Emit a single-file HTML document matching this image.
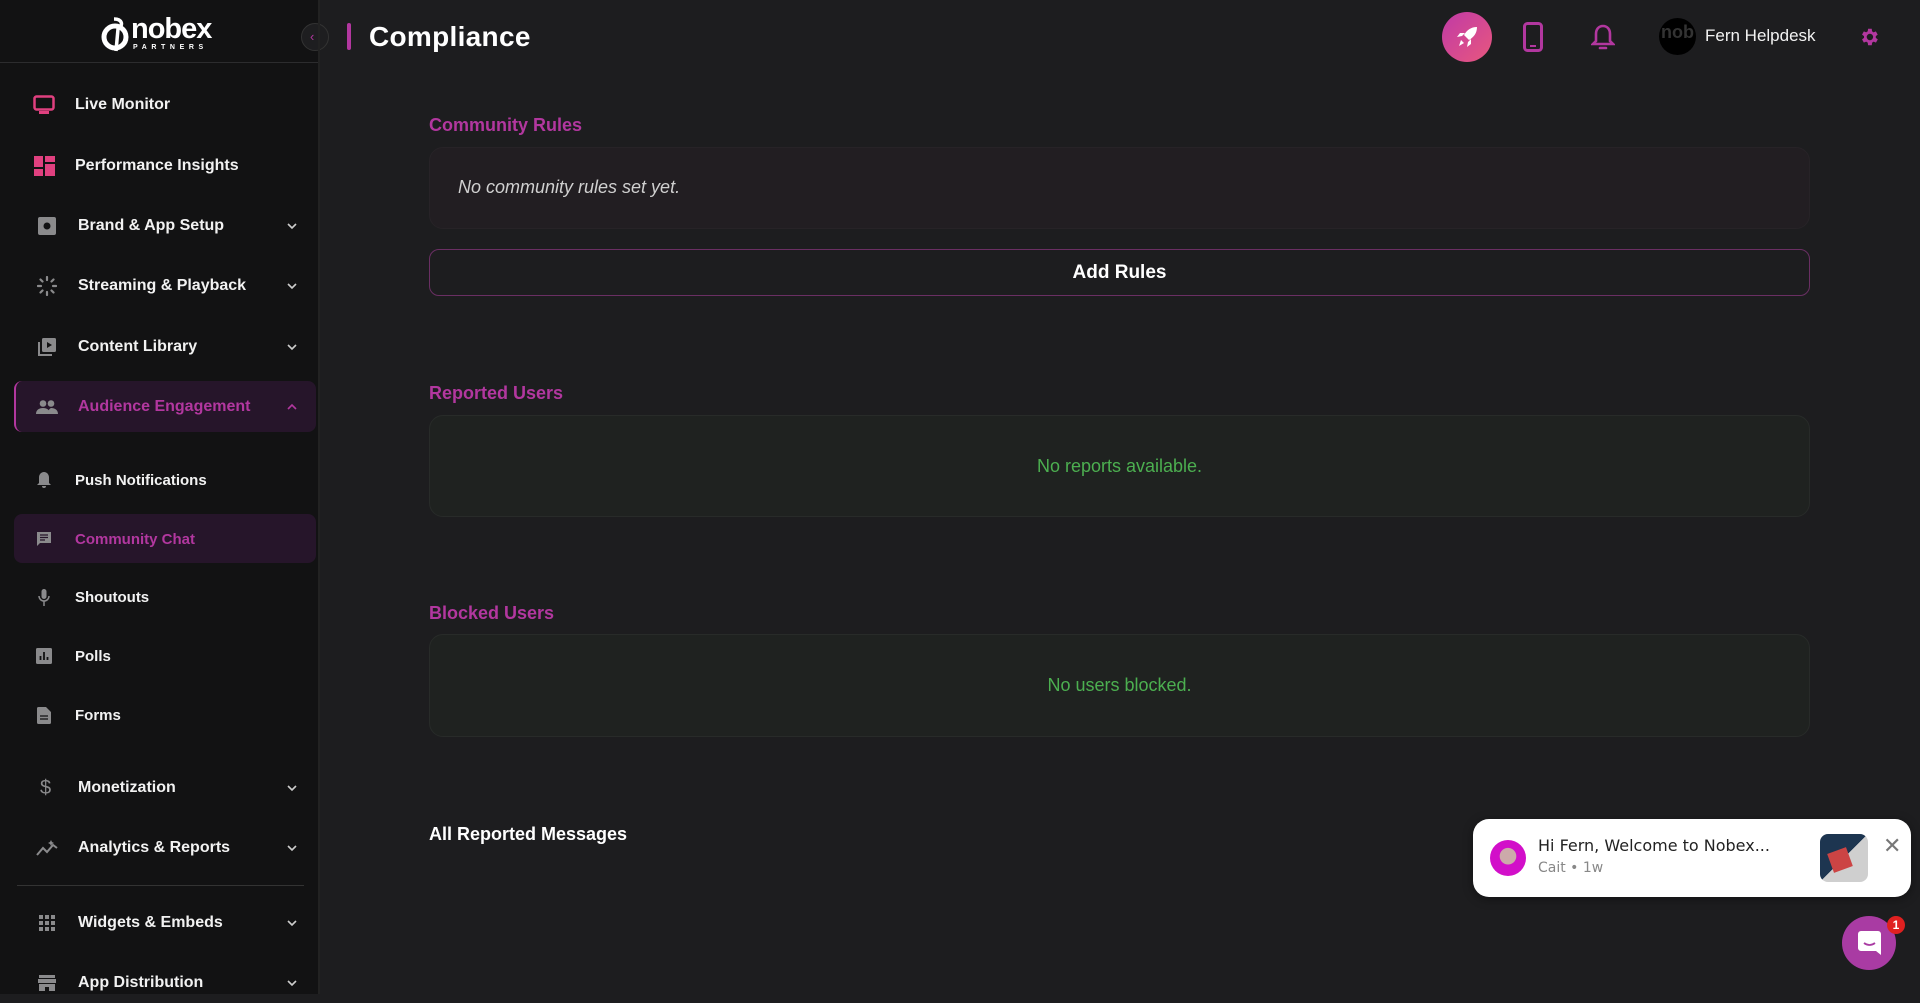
<!DOCTYPE html>
<html><head><meta charset="utf-8"><style>
*{margin:0;padding:0;box-sizing:border-box}
body{width:1920px;height:994px;overflow:hidden;background:#1d1d1f;font-family:"Liberation Sans",sans-serif;color:#fff;position:relative}
.sb{position:absolute;left:0;top:0;width:318px;height:994px;background:#121213}
.logo{position:absolute;left:0;top:0;width:318px;height:63px;border-bottom:1px solid #2c2c2e}
.it{position:absolute;left:0;width:318px;height:40px;display:flex;align-items:center;font-weight:700;font-size:16px;color:#f2f2f2}
.it svg{position:absolute}
.it .t{position:absolute;left:78px}
.it .c{position:absolute;left:287px;width:10px;height:10px}
.sub{font-size:15px}
.sub .t{left:75px}
.hl{position:absolute;border-radius:8px;background:#26152a}
.main .lbl{position:absolute;left:429px;font-weight:700;font-size:18px;color:#b2379f}
.box{position:absolute;left:429px;width:1381px;border-radius:14px}
</style></head><body>
<div class="sb">
 <div class="logo">
  <svg style="position:absolute;left:100px;top:17px" width="32" height="36" viewBox="0 0 32 36"><circle cx="15" cy="20" r="11" fill="none" stroke="#fff" stroke-width="5"/><path d="M14 2 C22 2 24 8 18 12 L16 34" stroke="#fff" stroke-width="3.5" fill="none"/></svg>
  <div style="position:absolute;left:131px;top:13px;font-size:29px;font-weight:700;letter-spacing:-1px">nobex</div>
  <div style="position:absolute;left:133px;top:44px;font-size:7px;font-weight:700;letter-spacing:4.6px">PARTNERS</div>
 </div>
 <div style="position:absolute;left:301px;top:23px;width:28px;height:28px;border-radius:50%;background:#1e1e20;border:1px solid #333;color:#b2379f;font-size:13px;line-height:26px;text-indent:8px">‹</div>

 <div class="it" style="top:85px"><svg style="left:33px" width="22" height="20" viewBox="0 0 22 20"><rect x="1.5" y="1.5" width="19" height="13" rx="2" fill="none" stroke="#e0407f" stroke-width="2.5"/><rect x="6" y="16" width="10" height="3" fill="#e0407f"/></svg><span class="t" style="left:75px">Live Monitor</span></div>
 <div class="it" style="top:146px"><svg style="left:34px" width="21" height="20" viewBox="0 0 21 20"><rect x="0" y="0" width="9" height="11" fill="#e0407f"/><rect x="11" y="0" width="10" height="6" fill="#e0407f"/><rect x="0" y="13" width="9" height="7" fill="#e0407f"/><rect x="11" y="8" width="10" height="12" fill="#e0407f"/></svg><span class="t" style="left:75px">Performance Insights</span></div>
 <div class="it" style="top:206px"><svg style="left:38px" width="18" height="18" viewBox="0 0 18 18"><rect width="18" height="18" rx="2" fill="#8a8a8c"/><circle cx="9" cy="9" r="3.5" fill="#121213"/></svg><span class="t">Brand &amp; App Setup</span><svg class="c" viewBox="0 0 10 10"><path d="M1 3l4 4 4-4" stroke="#ccc" stroke-width="1.6" fill="none"/></svg></div>
 <div class="it" style="top:266px"><svg style="left:37px" width="20" height="20" viewBox="0 0 20 20" stroke="#8a8a8c" stroke-width="2.2" stroke-linecap="round"><path d="M10 1v3M10 16v3M1 10h3M16 10h3M3.5 3.5l2 2M14.5 14.5l2 2M3.5 16.5l2-2M14.5 5.5l2-2"/></svg><span class="t">Streaming &amp; Playback</span><svg class="c" viewBox="0 0 10 10"><path d="M1 3l4 4 4-4" stroke="#ccc" stroke-width="1.6" fill="none"/></svg></div>
 <div class="it" style="top:327px"><svg style="left:37px" width="20" height="20" viewBox="0 0 20 20"><path d="M2 5v13h13" stroke="#8a8a8c" stroke-width="2" fill="none"/><rect x="5" y="1" width="14" height="14" rx="1.5" fill="#8a8a8c"/><path d="M10 5l5 3-5 3z" fill="#121213"/></svg><span class="t">Content Library</span><svg class="c" viewBox="0 0 10 10"><path d="M1 3l4 4 4-4" stroke="#ccc" stroke-width="1.6" fill="none"/></svg></div>

 <div class="hl" style="left:14px;top:381px;width:302px;height:51px;border-left:2px solid #b2379f"></div>
 <div class="it" style="top:387px;color:#b2379f"><svg style="left:36px" width="22" height="14" viewBox="0 0 22 14" fill="#8a8a8c"><circle cx="7" cy="3.5" r="3.3"/><circle cx="15" cy="3.5" r="3.3"/><path d="M0 14c0-4 3-6 7-6s7 2 7 6zM12 14c0-3 1-5 3-6 4 0 7 2 7 6z"/></svg><span class="t">Audience Engagement</span><svg class="c" viewBox="0 0 10 10"><path d="M1 7l4-4 4 4" stroke="#b2379f" stroke-width="1.6" fill="none"/></svg></div>

 <div class="it sub" style="top:460px"><svg style="left:37px" width="14" height="16" viewBox="0 0 14 16" fill="#8a8a8c"><path d="M7 0c3 0 5 2.5 5 5.5V11l2 2H0l2-2V5.5C2 2.5 4 0 7 0zM5 14h4a2 2 0 01-4 0z"/></svg><span class="t">Push Notifications</span></div>
 <div class="hl" style="left:14px;top:514px;width:302px;height:49px"></div>
 <div class="it sub" style="top:519px;color:#b2379f"><svg style="left:36px" width="16" height="16" viewBox="0 0 16 16"><path d="M1 1h14v11H4l-3 3z" fill="#8a8a8c"/><path d="M4 4h8M4 6.5h8M4 9h5" stroke="#26152a" stroke-width="1.3"/></svg><span class="t">Community Chat</span></div>
 <div class="it sub" style="top:577px"><svg style="left:38px" width="12" height="17" viewBox="0 0 12 17"><rect x="3.5" y="0" width="5" height="10" rx="2.5" fill="#8a8a8c"/><path d="M1 7a5 5 0 0010 0M6 12v5" stroke="#8a8a8c" stroke-width="1.5" fill="none"/></svg><span class="t">Shoutouts</span></div>
 <div class="it sub" style="top:636px"><svg style="left:36px" width="16" height="16" viewBox="0 0 16 16"><rect width="16" height="16" rx="1.5" fill="#8a8a8c"/><path d="M4.5 12V8M8 12V4M11.5 12V9" stroke="#121213" stroke-width="1.8"/></svg><span class="t">Polls</span></div>
 <div class="it sub" style="top:695px"><svg style="left:37px" width="14" height="17" viewBox="0 0 14 17"><path d="M0 1.5A1.5 1.5 0 011.5 0H9l5 5v10.5a1.5 1.5 0 01-1.5 1.5h-11A1.5 1.5 0 010 15.5z" fill="#8a8a8c"/><path d="M3 9h8M3 12h8" stroke="#121213" stroke-width="1.3"/></svg><span class="t">Forms</span></div>

 <div class="it" style="top:768px"><span style="position:absolute;left:40px;color:#8a8a8c;font-size:20px;font-weight:400">$</span><span class="t">Monetization</span><svg class="c" viewBox="0 0 10 10"><path d="M1 3l4 4 4-4" stroke="#ccc" stroke-width="1.6" fill="none"/></svg></div>
 <div class="it" style="top:828px"><svg style="left:36px" width="22" height="16" viewBox="0 0 22 16"><path d="M1 15l6-7 4 4 6-7 4 3" stroke="#8a8a8c" stroke-width="2" fill="none"/><path d="M15 0l1 2 2 1-2 1-1 2-1-2-2-1 2-1z" fill="#8a8a8c"/></svg><span class="t">Analytics &amp; Reports</span><svg class="c" viewBox="0 0 10 10"><path d="M1 3l4 4 4-4" stroke="#ccc" stroke-width="1.6" fill="none"/></svg></div>
 <div style="position:absolute;left:17px;top:885px;width:287px;height:1px;background:#333"></div>
 <div class="it" style="top:903px"><svg style="left:39px" width="16" height="16" viewBox="0 0 16 16" fill="#8a8a8c"><rect x="0" y="0" width="4" height="4"/><rect x="6" y="0" width="4" height="4"/><rect x="12" y="0" width="4" height="4"/><rect x="0" y="6" width="4" height="4"/><rect x="6" y="6" width="4" height="4"/><rect x="12" y="6" width="4" height="4"/><rect x="0" y="12" width="4" height="4"/><rect x="6" y="12" width="4" height="4"/><rect x="12" y="12" width="4" height="4"/></svg><span class="t">Widgets &amp; Embeds</span><svg class="c" viewBox="0 0 10 10"><path d="M1 3l4 4 4-4" stroke="#ccc" stroke-width="1.6" fill="none"/></svg></div>
 <div class="it" style="top:963px"><svg style="left:38px" width="18" height="16" viewBox="0 0 18 16" fill="#8a8a8c"><rect x="1" y="0" width="16" height="3"/><rect x="0" y="4" width="18" height="4"/><path d="M1 9h16v7h-6v-4H7v4H1z"/></svg><span class="t">App Distribution</span><svg class="c" viewBox="0 0 10 10"><path d="M1 3l4 4 4-4" stroke="#ccc" stroke-width="1.6" fill="none"/></svg></div>
</div>

<div style="position:absolute;left:318px;top:0;width:2px;height:994px;background:#222"></div>
<div style="position:absolute;left:347px;top:23px;width:4px;height:27px;border-radius:2px;background:#b2379f"></div>
<div style="position:absolute;left:369px;top:21px;font-size:28px;font-weight:700;letter-spacing:0.3px">Compliance</div>

<div style="position:absolute;left:1442px;top:12px;width:50px;height:50px;border-radius:50%;background:linear-gradient(135deg,#c03aa6,#e8577e)"><svg style="position:absolute;left:13px;top:13px" width="24" height="24" viewBox="0 0 24 24" fill="#fff"><path d="M22 2c-6 0-10 3-13 8l5 5c5-3 8-7 8-13zM7 11l-5 1 3-4h5zM13 17l-1 5 4-3v-5zM6 15l3 3-5 3z"/></svg></div>
<svg style="position:absolute;left:1523px;top:22px" width="20" height="30" viewBox="0 0 20 30"><rect x="1.5" y="1.5" width="17" height="27" rx="3" fill="none" stroke="#b2379f" stroke-width="3"/><rect x="7" y="23" width="6" height="2" fill="#b2379f"/></svg>
<svg style="position:absolute;left:1591px;top:23px" width="24" height="28" viewBox="0 0 24 28"><path d="M12 3c4.5 0 7 3.5 7 8v7l3 3H2l3-3v-7c0-4.5 2.5-8 7-8z" fill="none" stroke="#b2379f" stroke-width="2.6"/><path d="M9 25h6" stroke="#b2379f" stroke-width="2.6" stroke-linecap="round"/></svg>
<div style="position:absolute;left:1659px;top:18px;width:37px;height:37px;border-radius:50%;background:#000;overflow:hidden;font-weight:700;font-size:18px;color:#333;line-height:28px;text-align:center">nob</div>
<div style="position:absolute;left:1705px;top:26px;font-size:17px;color:#f2f2f2">Fern Helpdesk</div>
<svg style="position:absolute;left:1858px;top:26px" width="22" height="22" viewBox="0 0 24 24" fill="#b2379f"><path d="M19.4 13a7.5 7.5 0 000-2l2.1-1.6-2-3.5-2.5 1a7.6 7.6 0 00-1.7-1L15 3h-4l-.4 2.9a7.6 7.6 0 00-1.7 1l-2.5-1-2 3.5L6.6 11a7.5 7.5 0 000 2l-2.2 1.6 2 3.5 2.5-1c.5.4 1.100.7 1.7 1L11 21h4l.4-2.9c.6-.3 1.200-.6 1.700-1l2.500 1 2-3.500zM13 15.5a3.5 3.5 0 110-7 3.5 3.5 0 010 7z"/></svg>

<div class="main">
 <div class="lbl" style="top:115px">Community Rules</div>
 <div class="box" style="top:147px;height:82px;background:#221e22;border:1px solid #272327"></div>
 <div style="position:absolute;left:458px;top:177px;font-style:italic;font-size:18px;color:#d0d0d0">No community rules set yet.</div>
 <div class="box" style="top:249px;height:47px;border:1px solid #6a2f63;border-radius:10px;text-align:center;line-height:45px;font-weight:700;font-size:19px">Add Rules</div>

 <div class="lbl" style="top:383px">Reported Users</div>
 <div class="box" style="top:415px;height:102px;background:#1f2220;border:1px solid #282b29;text-align:center;line-height:100px;color:#4caf50;font-size:18px">No reports available.</div>
 <div class="lbl" style="top:603px">Blocked Users</div>
 <div class="box" style="top:634px;height:103px;background:#1f2220;border:1px solid #282b29;text-align:center;line-height:101px;color:#4caf50;font-size:18px">No users blocked.</div>
 <div style="position:absolute;left:429px;top:824px;font-weight:700;font-size:18px">All Reported Messages</div>
</div>

<div style="position:absolute;left:1473px;top:819px;width:438px;height:78px;background:#fff;border-radius:16px;box-shadow:0 2px 10px rgba(0,0,0,.4)">
 <div style="position:absolute;left:17px;top:21px;width:36px;height:36px;border-radius:50%;background:radial-gradient(circle at 50% 45%,#caa 0 30%,#d20fc9 32%)"></div>
 <div style="position:absolute;left:65px;top:17px;font-family:'DejaVu Sans',sans-serif;font-size:16px;color:#222">Hi Fern, Welcome to Nobex...</div>
 <div style="position:absolute;left:65px;top:41px;font-family:'DejaVu Sans',sans-serif;font-size:14px;color:#888">Cait • 1w</div>
 <div style="position:absolute;left:347px;top:15px;width:48px;height:48px;border-radius:8px;background:linear-gradient(135deg,#1d3550 50%,#cfcfcf 50%)"><div style="position:absolute;left:10px;top:16px;width:20px;height:20px;background:#c44;transform:rotate(-20deg)"></div></div>
 <div style="position:absolute;left:410px;top:14px;font-size:22px;color:#777">✕</div>
</div>
<div style="position:absolute;left:1842px;top:916px;width:54px;height:54px;border-radius:50%;background:#a93ba3">
 <svg style="position:absolute;left:16px;top:15px" width="23" height="24" viewBox="0 0 23 24"><path d="M3 0h17a3 3 0 013 3v21l-5-4H3a3 3 0 01-3-3V3a3 3 0 013-3z" fill="#fff"/><path d="M6 12q5.5 4 11 0" stroke="#a93ba3" stroke-width="1.8" fill="none"/></svg>
</div>
<div style="position:absolute;left:1887px;top:916px;width:18px;height:18px;border-radius:50%;background:#e02020;font-size:12px;font-weight:700;text-align:center;line-height:18px">1</div>
</body></html>
